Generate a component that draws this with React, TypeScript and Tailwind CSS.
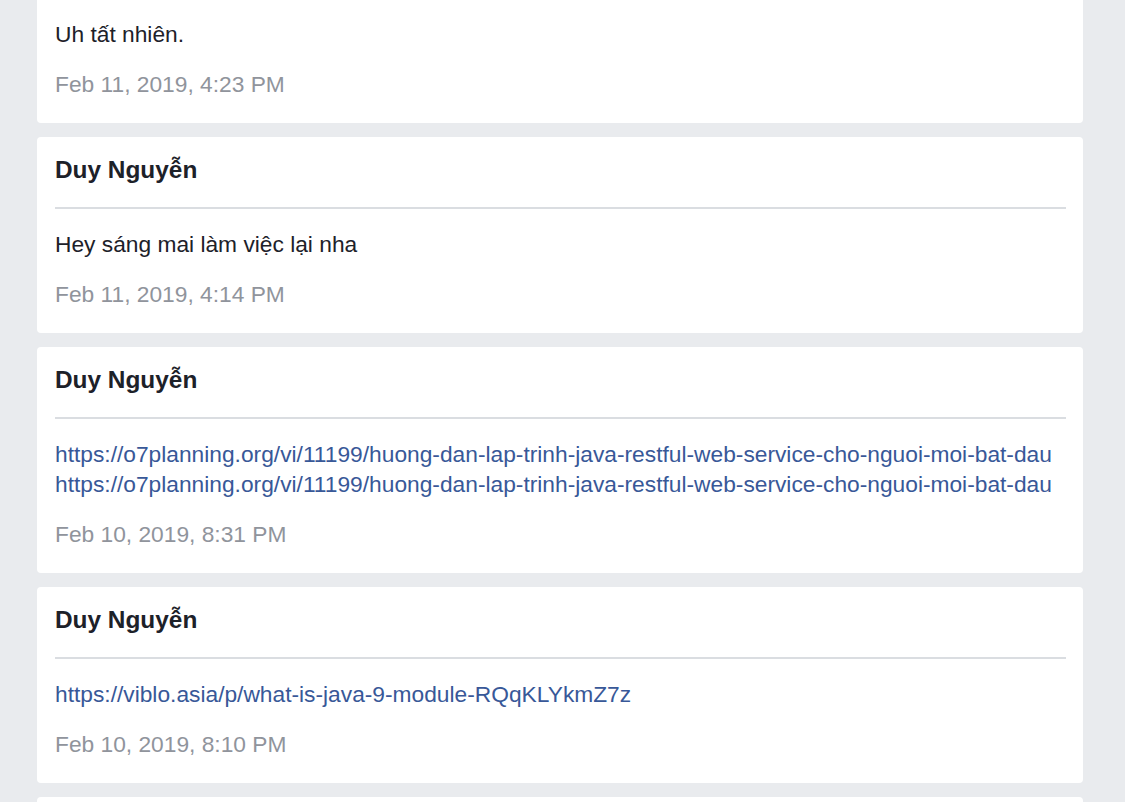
type Message = { sender: string; lines: string[]; link?: boolean; time: string };

const MESSAGES: Message[] = [
  { sender: "Duy Nguyễn", lines: ["Uh tất nhiên."], time: "Feb 11, 2019, 4:23 PM" },
  { sender: "Duy Nguyễn", lines: ["Hey sáng mai làm việc lại nha"], time: "Feb 11, 2019, 4:14 PM" },
  {
    sender: "Duy Nguyễn",
    lines: [
      "https://o7planning.org/vi/11199/huong-dan-lap-trinh-java-restful-web-service-cho-nguoi-moi-bat-dau",
      "https://o7planning.org/vi/11199/huong-dan-lap-trinh-java-restful-web-service-cho-nguoi-moi-bat-dau",
    ],
    link: true,
    time: "Feb 10, 2019, 8:31 PM",
  },
  {
    sender: "Duy Nguyễn",
    lines: ["https://viblo.asia/p/what-is-java-9-module-RQqKLYkmZ7z"],
    link: true,
    time: "Feb 10, 2019, 8:10 PM",
  },
  { sender: "Duy Nguyễn", lines: ["Ok"], time: "Feb 10, 2019, 8:02 PM" },
];

// Một tin nhắn trong bản xuất dữ liệu — tên, đường kẻ, nội dung, thời gian.
function MessageCard({ m }: { m: Message }) {
  return (
    <div className="rounded-[4px] bg-white pl-[18px] pr-[17px] pt-[18px] pb-[24px]">
      <div className="h-[30px] text-[24.4px] font-bold leading-[30px] text-[#1d2129]">{m.sender}</div>
      <div className="mt-[22px] h-[2px] bg-[#dadde1]" />
      <div className="mt-[20px] text-[22.75px] leading-[30px]">
        {m.lines.map((l, i) =>
          m.link ? (
            <div key={i}>
              <a href={l} className="text-[#385898]">{l}</a>
            </div>
          ) : (
            <div key={i} className="text-[#1d2129]">{l}</div>
          ),
        )}
      </div>
      <div className="mt-[20px] text-[22.75px] leading-[30px] text-[#90949c]">{m.time}</div>
    </div>
  );
}

export default function App() {
  return (
    <div className="h-[802px] overflow-hidden bg-[#e9ebee] font-['Liberation_Sans',Arial,sans-serif]">
      <div className="-mt-[73px] ml-[37px] flex w-[1046px] flex-col gap-[14px]">
        {MESSAGES.map((m, i) => (
          <MessageCard key={i} m={m} />
        ))}
      </div>
    </div>
  );
}
